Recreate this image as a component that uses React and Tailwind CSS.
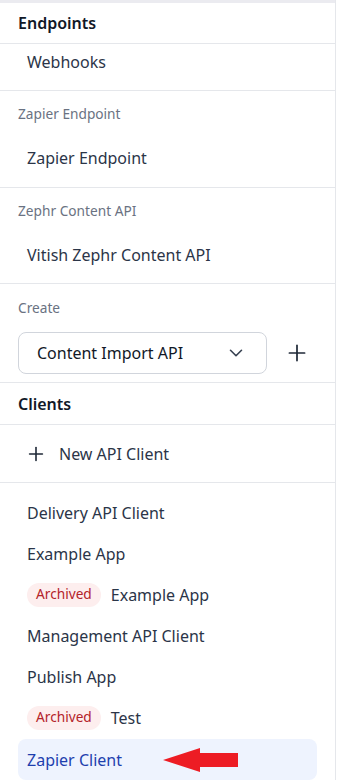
import { ChevronDown, Plus } from "lucide-react";

const Label = ({ children, tall }) => (
  <div className={`${tall ? "h-12" : "h-[46px]"} flex items-center text-[13.7px] text-gray-500`}>
    {children}
  </div>
);

const Item = ({ children, active, h = "h-[41px]" }) => (
  <div
    className={`${h} flex items-center gap-[10px] px-[9px] rounded-lg ${
      active ? "bg-[#eef3fe] text-[#1e3fae]" : "text-[#2b3548]"
    }`}
  >
    {children}
  </div>
);

const Archived = () => (
  <span className="inline-flex items-center h-6 px-[9px] rounded-full bg-[#fdeeee] text-[#b4232a] text-[13.7px]">
    Archived
  </span>
);

const Arrow = () => (
  <svg width="76" height="26" viewBox="0 0 76 26" className="ml-[31px]">
    <polygon points="0,13 37,1 37,6 75,6 75,20 37,20 37,25" fill="#ed1c24" />
  </svg>
);

const clients = [
  { name: "Delivery API Client" },
  { name: "Example App" },
  { name: "Example App", archived: true },
  { name: "Management API Client" },
  { name: "Publish App" },
  { name: "Test", archived: true },
];

export default function App() {
  return (
    <div className="w-[336px] h-[780px] overflow-hidden bg-white border-r border-gray-200 font-['Noto_Sans',sans-serif] text-[16px]">
      <div className="h-[3px] bg-[#ebebf0]" />

      <div className="h-[41px] flex items-center px-[18px] font-semibold text-[#111827] border-b border-gray-200">
        Endpoints
      </div>
      <div className="px-[18px] pb-[10px] border-b border-gray-200">
        <Item h="h-9">Webhooks</Item>
      </div>

      <div className="px-[18px] border-b border-gray-200 pb-[9px]">
        <Label>Zapier Endpoint</Label>
        <Item>Zapier Endpoint</Item>
      </div>

      <div className="px-[18px] border-b border-gray-200 pb-[8px]">
        <Label>Zephr Content API</Label>
        <Item>Vitish Zephr Content API</Item>
      </div>

      <div className="px-[18px] border-b border-gray-200 pb-[8px]">
        <Label tall>Create</Label>
        <div className="flex items-center">
          <button className="w-[249px] h-[42px] flex items-center justify-between pl-[18px] pr-[19px] rounded-lg border border-gray-300 text-[#111827]">
            Content Import API
            <ChevronDown size={22} strokeWidth={1.75} className="text-[#374151]" />
          </button>
          <Plus size={26} strokeWidth={1.6} className="ml-[17px] text-[#1f2937]" />
        </div>
      </div>

      <div className="h-[42px] flex items-center px-[18px] font-semibold text-[#111827] border-b border-gray-200">
        Clients
      </div>
      <div className="h-[58px] flex items-center gap-[12px] px-[25px] text-[#2b3548] border-b border-gray-200">
        <Plus size={22} strokeWidth={1.75} className="text-[#1f2937]" />
        New API Client
      </div>

      <div className="px-[18px] pt-[9px] flex flex-col">
        {clients.map((c, i) => (
          <Item key={i}>
            {c.archived && <Archived />}
            {c.name}
          </Item>
        ))}
        <div className="mt-[1px]">
          <Item active>
            Zapier Client
            <Arrow />
          </Item>
        </div>
      </div>
    </div>
  );
}
